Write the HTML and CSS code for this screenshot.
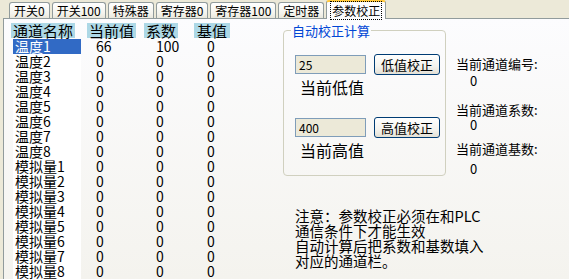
FILE: index.html
```html
<!DOCTYPE html>
<html lang="zh">

<head>
    <meta charset="UTF-8">
    <title>参数校正</title>
    <link rel="stylesheet" href="styles.css">
</head>

<body>
    <!-- tab strip -->
    <div class="tabs">
        <div class="tab">开关0</div>
        <div class="tab">开关100</div>
        <div class="tab">特殊器</div>
        <div class="tab">寄存器0</div>
        <div class="tab">寄存器100</div>
        <div class="tab">定时器</div>
        <div class="tab active"><span>参数校正</span></div>
    </div>

    <div class="panel">
        <div class="table">
            <div class="row head"><span>通道名称</span><span>当前值</span><span>系数</span><span>基值</span></div>
            <div class="row sel"><span class="name">温度1</span><span>66</span><span>100</span><span>0</span></div>
            <div class="row"><span class="name">温度2</span><span>0</span><span>0</span><span>0</span></div>
            <div class="row"><span class="name">温度3</span><span>0</span><span>0</span><span>0</span></div>
            <div class="row"><span class="name">温度4</span><span>0</span><span>0</span><span>0</span></div>
            <div class="row"><span class="name">温度5</span><span>0</span><span>0</span><span>0</span></div>
            <div class="row"><span class="name">温度6</span><span>0</span><span>0</span><span>0</span></div>
            <div class="row"><span class="name">温度7</span><span>0</span><span>0</span><span>0</span></div>
            <div class="row"><span class="name">温度8</span><span>0</span><span>0</span><span>0</span></div>
            <div class="row"><span class="name">模拟量1</span><span>0</span><span>0</span><span>0</span></div>
            <div class="row"><span class="name">模拟量2</span><span>0</span><span>0</span><span>0</span></div>
            <div class="row"><span class="name">模拟量3</span><span>0</span><span>0</span><span>0</span></div>
            <div class="row"><span class="name">模拟量4</span><span>0</span><span>0</span><span>0</span></div>
            <div class="row"><span class="name">模拟量5</span><span>0</span><span>0</span><span>0</span></div>
            <div class="row"><span class="name">模拟量6</span><span>0</span><span>0</span><span>0</span></div>
            <div class="row"><span class="name">模拟量7</span><span>0</span><span>0</span><span>0</span></div>
            <div class="row"><span class="name">模拟量8</span><span>0</span><span>0</span><span>0</span></div>
        </div>

        <div class="side">
            <fieldset class="calib">
                <legend>自动校正计算</legend>
                <div class="calib-row">
                    <input class="value-box" type="text" value="25" readonly>
                    <button class="btn">低值校正</button>
                </div>
                <div class="calib-label">当前低值</div>
                <div class="calib-row second">
                    <input class="value-box" type="text" value="400" readonly>
                    <button class="btn">高值校正</button>
                </div>
                <div class="calib-label">当前高值</div>
            </fieldset>

            <div class="info">
                <div class="info-label first">当前通道编号:</div>
                <div class="info-value v1">0</div>
                <div class="info-label l2">当前通道系数:</div>
                <div class="info-value">0</div>
                <div class="info-label l3">当前通道基数:</div>
                <div class="info-value v3">0</div>
            </div>

            <div class="note">
                注意：参数校正必须在和PLC<br>
                通信条件下才能生效<br>
                自动计算后把系数和基数填入<br>
                对应的通道栏。
            </div>
        </div>
    </div>
</body>

</html>
```

FILE: styles.css
```css
* {
    box-sizing: border-box;
}

body {
    margin: 0;
    background-color: #ece9d8;
    font-family: "Noto Sans CJK SC", "Liberation Sans", sans-serif;
    color: #000;
    overflow: hidden;
}

/* tabs */
.tabs {
    display: flex;
    align-items: flex-end;
    gap: 2px;
    height: 18px;
    padding-left: 9px;
}

.tab {
    height: 16px;
    padding: 0 4px;
    border: 1px solid #919b9c;
    border-bottom: none;
    border-radius: 3px 3px 0 0;
    background: linear-gradient(#ffffff, #f4f3ec 70%, #e9e7dc);
    font-size: 12px;
    line-height: 15px;
    white-space: nowrap;
}

.tab.active {
    position: relative;
    z-index: 1;
    height: 19px;
    margin-bottom: -1px;
    border-top: 2px solid #ffc83c;
    background: #fcfcfe;
    padding-top: 1px;
}

.tab.active span {
    outline: 1px dotted #000;
    padding: 0 1px;
}

/* page panel */
.panel {
    display: flex;
    height: 261px;
    margin-left: 3px;
    padding: 4px 0 0 7px;
    border-top: 1px solid #919b9c;
    border-left: 1px solid #919b9c;
    background: linear-gradient(#fcfcfe, #f4f3ee);
}

.table {
    width: 272px;
    flex-shrink: 0;
}

.row {
    display: grid;
    grid-template-columns: 76px 57px 50px 1fr;
    font-size: 14px;
    line-height: 15px;
    height: 15px;
    white-space: nowrap;
}

.row span:nth-child(2) {
    padding-left: 9px;
}

.row span:nth-child(3) {
    padding-left: 12px;
}

.row span:nth-child(4) {
    padding-left: 13px;
}

.row.head {
    font-size: 15px;
    margin-bottom: 1px;
}

.row.head span {
    justify-self: start;
    padding: 0 2px;
    background-color: #add8e6;
}

.row.head span:nth-child(4) {
    padding: 0 3px;
}

.name {
    width: 68px;
    margin-left: 2px;
    padding-left: 2px;
    background-color: #fff;
}

.row.sel .name {
    background-color: #316ac5;
    color: #fff;
}

/* right side */
.side {
    display: grid;
    grid-template-columns: 163px auto;
    column-gap: 10px;
    align-content: start;
}

.calib {
    width: 163px;
    margin: 0;
    padding: 0 5px 5px 11px;
    border: 1px solid #d0d0bf;
    border-radius: 4px;
    min-width: 0;
}

.calib legend {
    margin-left: -4px;
    padding: 0 1px;
    font-size: 13px;
    line-height: 15px;
    color: #0046d5;
}

.calib-row {
    display: flex;
    align-items: center;
    gap: 8px;
    margin-top: 16px;
}

.calib-row.second {
    margin-top: 21px;
}

.value-box {
    width: 71px;
    height: 19px;
    padding: 0 3px;
    border: 1px solid #7f9db9;
    background-color: #ece9d8;
    font-family: inherit;
    font-size: 12px;
    color: #000;
}

.btn {
    width: 66px;
    height: 21px;
    padding: 0;
    border: 1px solid #003c74;
    border-radius: 3px;
    background: linear-gradient(#ffffff, #f4f3ee 60%, #e3e0d5);
    font-family: inherit;
    font-size: 13px;
    line-height: 17px;
    color: #000;
}

.calib-label {
    margin: 3px 0 0 5px;
    font-size: 16px;
    line-height: 18px;
}

.info {
    font-size: 13px;
    line-height: 15px;
}

.info-label.first {
    margin-top: 33px;
}

.info-label.l2 {
    margin-top: 14px;
}

.info-label.l3 {
    margin-top: 9px;
}

.info-value {
    padding-left: 14px;
}

.info-value.v1 {
    margin-top: 2px;
}

.info-value.v3 {
    margin-top: 5px;
}

.note {
    grid-column: 1 / -1;
    margin: 32px 0 0 12px;
    font-size: 14.5px;
    line-height: 15px;
}
```
